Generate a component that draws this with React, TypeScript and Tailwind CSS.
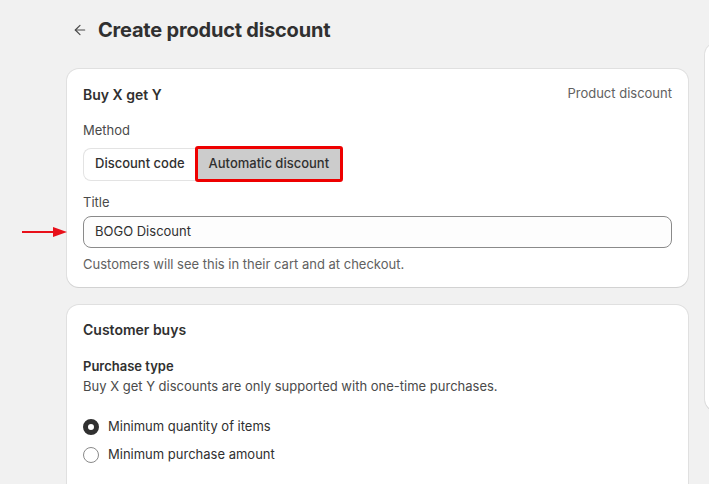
import { ArrowLeft } from 'lucide-react';

function Card({ children, className = '' }: { children: React.ReactNode; className?: string }) {
  return (
    <div
      className={`rounded-[12px] bg-white shadow-[0_1px_0_0_rgba(26,26,26,0.07),0_0_0_1px_rgba(0,0,0,0.07)] ${className}`}
    >
      {children}
    </div>
  );
}

function Radio({ checked, label }: { checked?: boolean; label: string }) {
  return (
    <label className="flex items-center gap-[9px] h-[28px]">
      {checked ? (
        <span className="h-[16px] w-[16px] rounded-full border-[5px] border-[#303030] bg-white" />
      ) : (
        <span className="h-[16px] w-[16px] rounded-full border border-[#8a8a8a] bg-white" />
      )}
      <span className="text-[13px] text-[#303030]">{label}</span>
    </label>
  );
}

export default function App() {
  return (
    <div
      className="relative h-[484px] w-[709px] overflow-hidden bg-[#f1f1f1] text-[#303030]"
      style={{ fontFamily: 'Inter, "Noto Sans", sans-serif' }}
    >
      {/* Annotation arrow */}
      <div className="absolute left-[22px] top-[227px] flex items-center">
        <div className="h-[2px] w-[31px] bg-[#e8101a]" />
        <div className="h-0 w-0 border-y-[5px] border-l-[14px] border-y-transparent border-l-[#e8101a]" />
      </div>

      <div className="flex gap-[17px] pl-[67px] pt-[17px]">
        {/* Main column */}
        <div className="w-[621px] shrink-0">
          <div className="flex h-[26px] items-center gap-[10px] pl-[5px]">
            <ArrowLeft className="h-[16px] w-[16px] text-[#4a4a4a]" strokeWidth={1.8} />
            <h1 className="text-[20px] font-bold tracking-[-0.2px] text-[#303030]">Create product discount</h1>
          </div>

          <Card className="mt-[26px] px-[16px] pb-[13px] pt-[15px]">
            <div className="flex items-center justify-between h-[20px]">
              <h2 className="text-[14px] font-semibold">Buy X get Y</h2>
              <span className="text-[13px] text-[#616161]">Product discount</span>
            </div>

            <div className="mt-[16px] text-[13px] text-[#4a4a4a] h-[20px] leading-[20px]">Method</div>
            <div className="mt-[6px] flex items-center">
              <button className="h-[33px] rounded-l-[8px] border border-r-0 border-[#e3e3e3] bg-white px-[11px] text-[13px] font-medium text-[#303030]">
                Discount code
              </button>
              <button className="-ml-[1px] h-[36px] rounded-[3px] border-[3px] border-[#ee0000] bg-[#cccccc] px-[11px] text-[13px] font-medium text-[#303030]">
                Automatic discount
              </button>
            </div>

            <div className="mt-[10px] text-[13px] text-[#4a4a4a] h-[20px] leading-[20px]">Title</div>
            <div className="mt-[4px] flex h-[32px] items-center rounded-[8px] border border-[#8a8a8a] bg-[#fdfdfd] px-[11px] text-[13px] text-[#303030]">
              BOGO Discount
            </div>
            <p className="mt-[6px] h-[20px] leading-[20px] text-[13px] text-[#616161]">
              Customers will see this in their cart and at checkout.
            </p>
          </Card>

          <Card className="mt-[18px] h-[300px] px-[16px] pt-[15px]">
            <h2 className="text-[14px] font-semibold h-[20px] leading-[20px]">Customer buys</h2>
            <h3 className="mt-[16px] text-[13px] font-semibold h-[20px] leading-[20px]">Purchase type</h3>
            <p className="text-[13px] text-[#4a4a4a] h-[20px] leading-[20px]">
              Buy X get Y discounts are only supported with one-time purchases.
            </p>
            <div className="mt-[17px] flex flex-col">
              <Radio checked label="Minimum quantity of items" />
              <Radio label="Minimum purchase amount" />
            </div>
          </Card>
        </div>

        {/* Side column */}
        <Card className="mt-[26px] h-[368px] w-[280px] shrink-0" />
      </div>
    </div>
  );
}
